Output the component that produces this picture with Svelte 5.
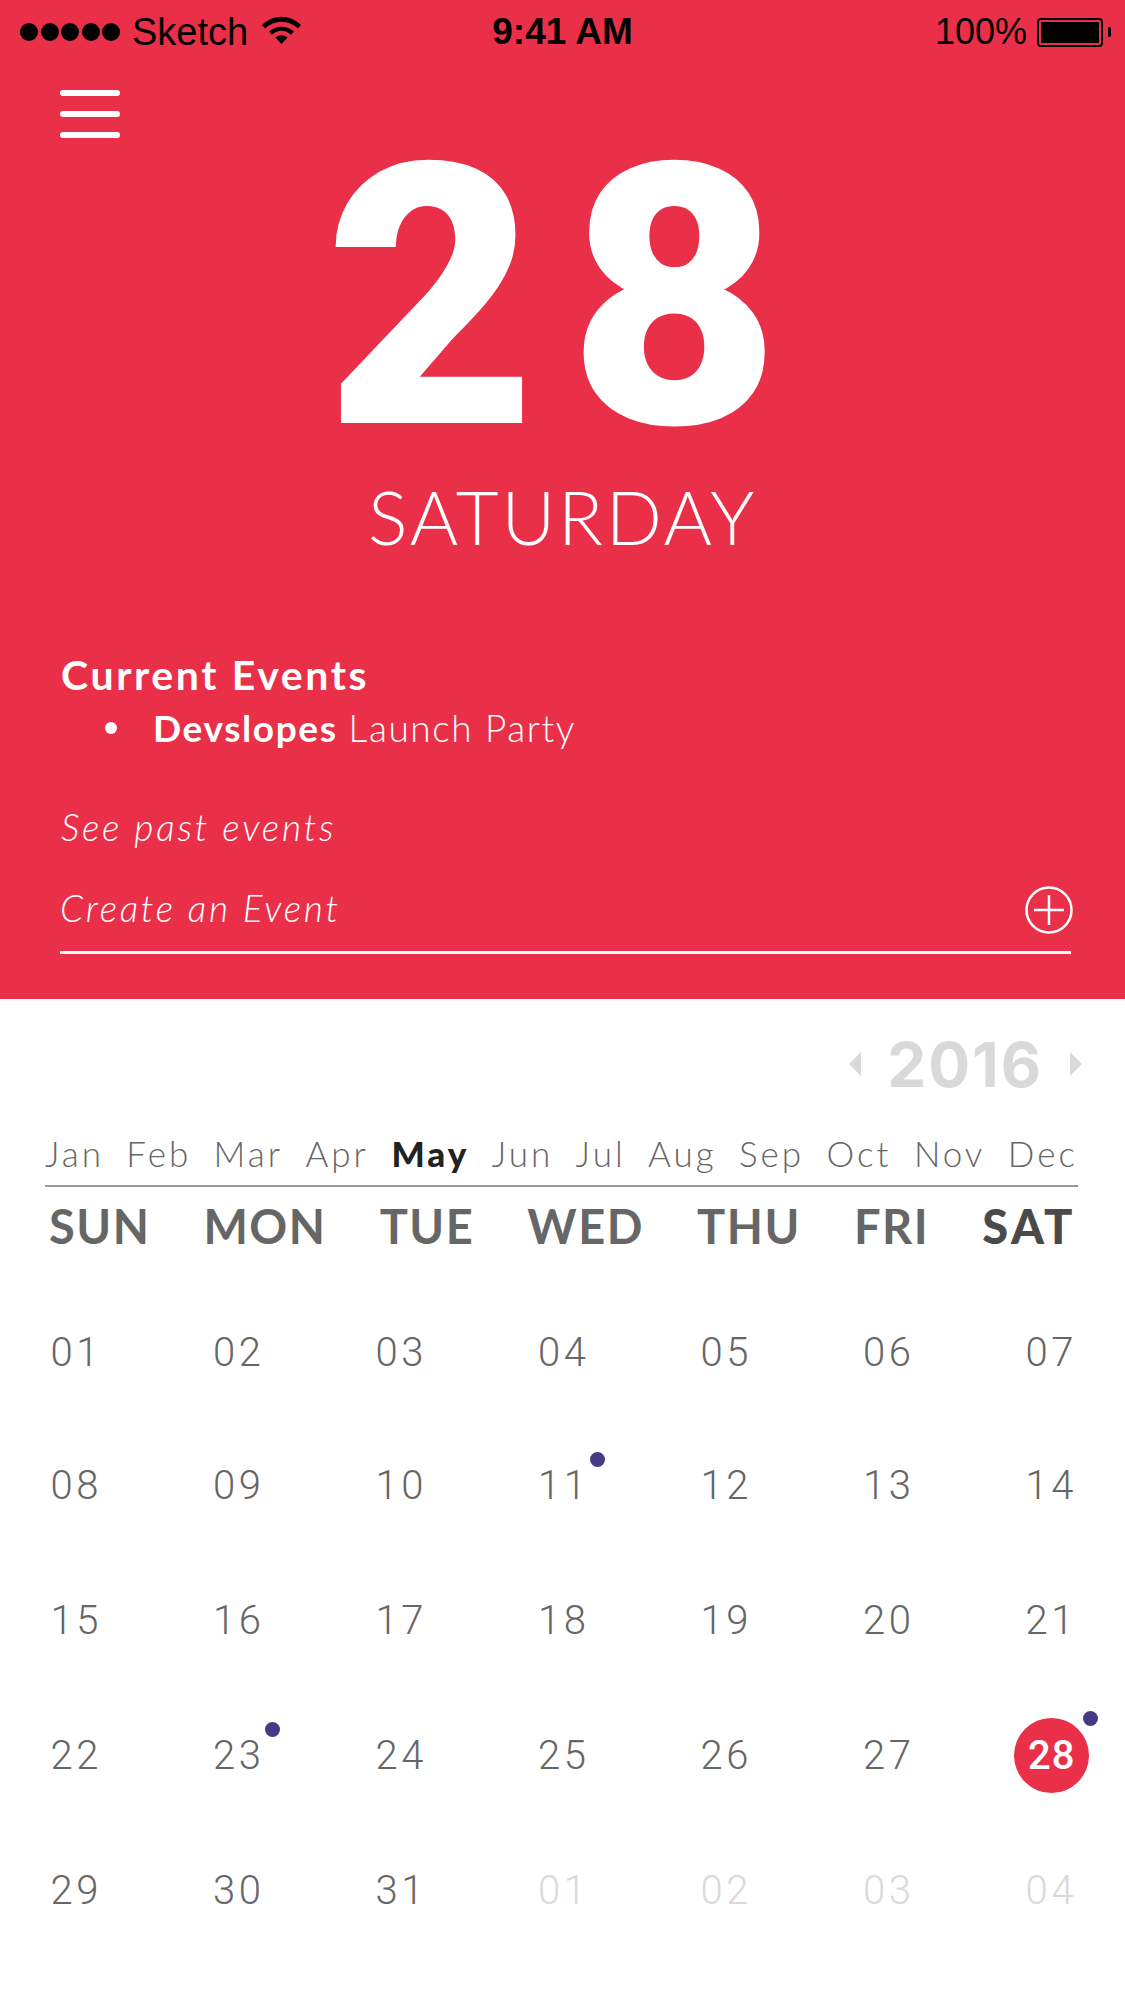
<svelte:options runes={true} />

<script lang="ts">
  const months = ["Jan", "Feb", "Mar", "Apr", "May", "Jun", "Jul", "Aug", "Sep", "Oct", "Nov", "Dec"];
  const weekdays = ["SUN", "MON", "TUE", "WED", "THU", "FRI", "SAT"];
  const eventDays = [11, 23, 28];

  const days = Array.from({ length: 35 }, (_, i) => {
    const muted = i > 30;
    const n = muted ? i - 30 : i + 1;
    return { n, label: String(n).padStart(2, "0"), muted };
  });
</script>

<div class="screen">
  <header class="hero">
    <div class="status">
      <div class="status-left">
        <span class="signal">
          {#each [0, 1, 2, 3, 4] as dot (dot)}
            <i></i>
          {/each}
        </span>
        <span class="carrier">Sketch</span>
        <svg class="wifi" viewBox="0 0 39 28">
          <path d="M0 9C11-2 28-2 39 9l-3 3.500C26.500 3.500 12.500 3.500 3 12.500z" />
          <path d="M7 15.500C14 9 25 9 32 15.500l-3 3.200C23 13.500 16 13.500 10 18.700z" />
          <path d="M13.500 21.500C17 18.500 22 18.500 25.500 21.500L19.500 28z" />
        </svg>
      </div>
      <span class="clock">9:41 AM</span>
      <div class="status-right">
        <span>100%</span>
        <span class="battery"><i></i></span>
        <span class="battery-tip"></span>
      </div>
    </div>

    <button class="menu" aria-label="Menu"><i></i><i></i><i></i></button>

    <div class="date-number">28</div>
    <div class="date-day">SATURDAY</div>

    <section class="events">
      <h2>Current Events</h2>
      <ul>
        <li><strong>Devslopes</strong> Launch Party</li>
      </ul>
      <p class="past">See past events</p>
    </section>

    <div class="create">
      <span>Create an Event</span>
      <svg viewBox="0 0 48 48" width="48" height="48" fill="none" stroke="#fff" stroke-width="2.500">
        <circle cx="24" cy="24" r="22.500" />
        <path d="M24 9v30M9 24h30" />
      </svg>
    </div>
  </header>

  <main class="calendar">
    <div class="year">
      <span class="arrow left"></span>
      <span class="year-label">2016</span>
      <span class="arrow right"></span>
    </div>

    <div class="months">
      {#each months as month (month)}
        <span class:current={month === "May"}>{month}</span>
      {/each}
    </div>

    <div class="weekdays">
      {#each weekdays as day (day)}
        <span class:current={day === "SAT"}>{day}</span>
      {/each}
    </div>

    <div class="days">
      {#each days as day (day.label + day.muted)}
        <div class="day" class:muted={day.muted}>
          <span class="num" class:today={!day.muted && day.n === 28}>
            {day.label}
            {#if !day.muted && eventDays.includes(day.n)}
              <i class="dot"></i>
            {/if}
          </span>
        </div>
      {/each}
    </div>
  </main>
</div>

<style>
  :global(body) {
    margin: 0;
    background: #fff;
  }

  .screen {
    width: 1125px;
    height: 2001px;
    overflow: hidden;
    font-family: Lato, "Open Sans", sans-serif;
  }

  .hero {
    height: 999px;
    box-sizing: border-box;
    background: #ea3049;
    color: #fff;
    display: flex;
    flex-direction: column;
  }

  .status {
    height: 60px;
    padding: 2px 14px 0 20px;
    display: grid;
    grid-template-columns: 1fr auto 1fr;
    align-items: center;
    color: #000;
    font-family: "Liberation Sans", sans-serif;
    font-size: 36px;
  }

  .status-left {
    display: flex;
    align-items: center;
    gap: 12px;
  }

  .carrier {
    font-size: 38px;
  }

  .signal {
    display: flex;
    gap: 2.500px;
  }

  .signal i {
    width: 18px;
    height: 18px;
    border-radius: 50%;
    background: #000;
  }

  .wifi {
    fill: #000;
    margin-left: 2px;
    width: 39px;
    height: 28px;
    margin-top: -4px;
  }

  .clock {
    font-weight: 700;
    font-size: 37px;
    margin-right: 6px;
  }

  .status-right {
    display: flex;
    align-items: center;
    justify-content: flex-end;
    font-size: 36px;
  }

  .status-right > span:first-child {
    margin-right: 10px;
  }

  .battery {
    width: 66px;
    height: 29px;
    box-sizing: border-box;
    border: 2px solid #000;
    border-radius: 4px;
    padding: 2px;
    display: flex;
  }

  .battery i {
    flex: 1;
    background: #000;
    border-radius: 1px;
  }

  .battery-tip {
    width: 3px;
    height: 10px;
    margin-left: 5px;
    background: #000;
    border-radius: 0 2px 2px 0;
  }

  .menu {
    align-self: flex-start;
    margin: 28px 0 0 60px;
    padding: 0;
    width: 60px;
    height: 48px;
    border: 0;
    background: none;
    display: flex;
    flex-direction: column;
    justify-content: space-between;
  }

  .menu i {
    height: 6px;
    background: #fff;
    border-radius: 3px;
  }

  .date-number {
    margin-top: -17px;
    padding-left: 12px;
    height: 354px;
    line-height: 354px;
    text-align: center;
    font-family: Roboto, Inter, sans-serif;
    font-size: 365px;
    font-weight: 900;
    letter-spacing: 32px;
  }

  .date-day {
    text-align: center;
    font-size: 74px;
    line-height: 84px;
    font-weight: 300;
    letter-spacing: 2.800px;
  }

  .events {
    padding: 0 61px;
    margin-top: 91px;
  }

  .events h2 {
    margin: 0;
    font-size: 41px;
    line-height: 50px;
    font-weight: 700;
    letter-spacing: 2.600px;
  }

  .events ul {
    margin: 3px 0 0;
    padding: 0 0 0 44px;
    list-style: none;
    font-size: 37px;
    line-height: 50px;
    font-weight: 300;
    letter-spacing: 1.600px;
  }

  .events li {
    display: flex;
    align-items: center;
    gap: 0.300em;
  }

  .events li::before {
    content: "";
    width: 12px;
    height: 12px;
    border-radius: 50%;
    background: #fff;
    margin-right: 25px;
  }

  .events strong {
    font-weight: 700;
  }

  .past {
    margin: 49px 0 0;
    font-size: 37px;
    line-height: 50px;
    font-style: italic;
    font-weight: 300;
    letter-spacing: 2.800px;
  }

  .create {
    margin: 31px 54px 0 60px;
    padding-bottom: 20px;
    border-bottom: 3px solid #fff;
    display: flex;
    align-items: center;
    justify-content: space-between;
    font-size: 37px;
    font-style: italic;
    font-weight: 300;
    letter-spacing: 2.700px;
  }

  .create svg {
    margin: 3px -2px -3px 0;
  }

  .calendar {
    color: #666;
  }

  .year {
    display: flex;
    align-items: center;
    justify-content: flex-end;
    padding: 35px 43px 0 0;
    height: 60px;
    color: #d9d9d9;
  }

  .year-label {
    font-family: Inter, Lato, sans-serif;
    font-size: 62px;
    font-weight: 700;
    letter-spacing: 2px;
    margin: 0 27px 0 26px;
  }

  .arrow {
    width: 0;
    height: 0;
    border-top: 12px solid transparent;
    border-bottom: 12px solid transparent;
  }

  .arrow.left {
    border-right: 12px solid #d9d9d9;
  }

  .arrow.right {
    border-left: 12px solid #d9d9d9;
  }

  .months {
    margin: 36px 47px 0 45px;
    padding-bottom: 9px;
    display: flex;
    justify-content: space-between;
    font-size: 35px;
    line-height: 46px;
    font-weight: 300;
    letter-spacing: 3px;
    border-bottom: 2px solid #999;
  }

  .months .current {
    font-weight: 900;
    color: #222;
  }

  .weekdays {
    margin: 10px 49px 0 49px;
    display: flex;
    justify-content: space-between;
    font-size: 47px;
    line-height: 58px;
    font-weight: 700;
    letter-spacing: 1.500px;
  }

  .weekdays .current {
    color: #4a4a4a;
    font-weight: 900;
    letter-spacing: 3.500px;
  }

  .days {
    margin: 33px 0 0 -5px;
    width: 1137px;
    display: grid;
    grid-template-columns: repeat(7, 162.500px);
    grid-template-rows: 130px repeat(4, 135px);
    font-family: Roboto, Lato, sans-serif;
    font-size: 40px;
    font-weight: 300;
    letter-spacing: 3.500px;
  }

  .day {
    display: flex;
    align-items: center;
    justify-content: center;
  }

  .day.muted {
    color: #d9d9d9;
  }

  .num {
    position: relative;
    line-height: 1;
  }

  .num.today {
    width: 75px;
    height: 75px;
    border-radius: 50%;
    background: #ea3049;
    color: #fff;
    font-weight: 500;
    display: flex;
    align-items: center;
    justify-content: center;
    letter-spacing: 1px;
    margin-left: 1px;
  }

  .dot {
    position: absolute;
    right: -16px;
    top: -14px;
    width: 15px;
    height: 15px;
    border-radius: 50%;
    background: #453a85;
  }

  .today .dot {
    right: -9px;
    top: -7px;
  }
</style>
